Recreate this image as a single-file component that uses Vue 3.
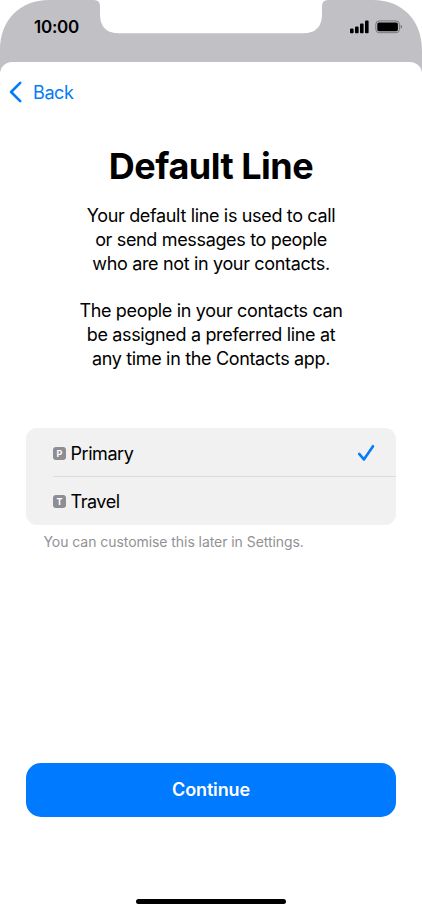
<template>
  <div class="phone">
    <header class="status-bar">
      <svg class="status-shape" viewBox="0 0 422 80" aria-hidden="true">
        <path
          d="M0 80V50C0 20 20 0 49 0H94Q100 0 100 6V14Q100 33.3 119 33.3H303Q322 33.3 322 14V6Q322 0 328 0H373C402 0 422 20 422 50V80Z"
          fill="#c1c0c5"
        />
      </svg>
      <span class="time">10:00</span>
      <svg class="status-icons" width="54" height="16" viewBox="0 0 54 16">
        <rect x="0" y="8.6" width="3.6" height="4.6" rx="1" />
        <rect x="5" y="6.4" width="3.6" height="6.8" rx="1" />
        <rect x="10" y="3.5" width="3.6" height="9.7" rx="1" />
        <rect x="15" y="0.6" width="3.6" height="12.6" rx="1" />
        <rect
          x="25.8"
          y="0.9"
          width="23.6"
          height="11.8"
          rx="3.4"
          fill="none"
          stroke="#77767a"
          stroke-width="1"
        />
        <rect x="27.3" y="2.4" width="20.6" height="8.8" rx="1.6" />
        <path d="M50.6 4.8Q52.1 5.4 52.1 6.8T50.6 8.8Z" fill="#77767a" />
      </svg>
    </header>

    <main class="sheet">
      <button class="back">
        <svg width="13" height="22" viewBox="0 0 13 22">
          <path d="M11.2 1.8L2.1 11L11.2 20.2" />
        </svg>
        <span>Back</span>
      </button>

      <h1 class="title">Default Line</h1>

      <p v-for="(lines, i) in paragraphs" :key="i" class="description">
        <span v-for="line in lines" :key="line">{{ line }}</span>
      </p>

      <ul class="lines">
        <li
          v-for="line in simLines"
          :key="line.name"
          class="line"
          @click="selected = line.name"
        >
          <div class="line-row">
            <span class="badge">{{ line.name[0] }}</span>
            <span class="line-name">{{ line.name }}</span>
            <svg
              v-if="selected === line.name"
              class="check"
              width="18"
              height="18"
              viewBox="0 0 18 18"
            >
              <path d="M2.2 9.9L6.9 15.4L16 2.2" />
            </svg>
          </div>
        </li>
      </ul>
      <p class="hint">You can customise this later in Settings.</p>

      <button class="continue">Continue</button>
      <div class="home-indicator"></div>
    </main>
  </div>
</template>

<script setup>
import { ref } from "vue";

const paragraphs = [
  [
    "Your default line is used to call",
    "or send messages to people",
    "who are not in your contacts.",
  ],
  [
    "The people in your contacts can",
    "be assigned a preferred line at",
    "any time in the Contacts app.",
  ],
];

const simLines = [{ name: "Primary" }, { name: "Travel" }];
const selected = ref("Primary");
</script>

<style>
body {
  margin: 0;
  background: #fff;
}
</style>

<style scoped>
.phone {
  display: flex;
  flex-direction: column;
  height: 913px;
  overflow: hidden;
  color: #000;
  font-family: Inter, "Liberation Sans", sans-serif;
}

button {
  border: 0;
  padding: 0;
  font-family: inherit;
  cursor: pointer;
}

.status-bar {
  position: relative;
  flex: none;
  display: flex;
  justify-content: space-between;
  align-items: flex-start;
  box-sizing: border-box;
  height: 61.5px;
  padding: 20px 18px 0 34px;
}

.status-shape {
  position: absolute;
  top: 0;
  left: 0;
  width: 422px;
  height: 80px;
}

.time {
  position: relative;
  margin-top: -3px;
  font-size: 17px;
  font-weight: 600;
  line-height: 21px;
  letter-spacing: -0.25px;
}

.status-icons {
  position: relative;
}

.sheet {
  position: relative;
  flex: 1;
  display: flex;
  flex-direction: column;
  box-sizing: border-box;
  padding: 0 26px;
  border-radius: 12px 12px 0 0;
  background: #fff;
}

.back {
  display: flex;
  align-items: center;
  align-self: flex-start;
  gap: 11px;
  height: 24px;
  margin: 18.5px 0 0 -17px;
  background: none;
  color: #047bf8;
  font-size: 18px;
  letter-spacing: -0.4px;
}

.back path,
.check path {
  fill: none;
  stroke: #047bf8;
  stroke-width: 2.6;
  stroke-linecap: round;
  stroke-linejoin: round;
}

.title {
  margin: 40px 0 16px;
  font-size: 36px;
  font-weight: 700;
  line-height: 44px;
  letter-spacing: -0.5px;
  text-align: center;
}

.description {
  margin: 0 0 24px;
  font-size: 18px;
  line-height: 23.8px;
  letter-spacing: -0.34px;
  text-align: center;
}

.description span {
  display: block;
}

.lines {
  margin: 33.6px 0 0;
  padding: 0;
  border-radius: 11px;
  background: #f1f1f1;
  list-style: none;
}

.line {
  padding-left: 27px;
}

.line-row {
  display: flex;
  align-items: center;
  box-sizing: border-box;
  height: 48px;
  padding-top: 2px;
}

.line + .line .line-row {
  border-top: 1px solid #dcdcde;
  height: 48.4px;
  padding-top: 0.6px;
}

.badge {
  width: 13px;
  height: 13px;
  border-radius: 3px;
  background: #8e8d93;
  color: #fff;
  font-size: 9px;
  font-weight: 700;
  line-height: 13px;
  text-align: center;
}

.line-name {
  margin-left: 4.5px;
  font-size: 18px;
  letter-spacing: -0.45px;
}

.check {
  margin: 0 21px 0 auto;
}

.hint {
  margin: 8.2px 0 0 17.5px;
  color: #929196;
  font-size: 14px;
  line-height: 18px;
  letter-spacing: -0.06px;
}

.continue {
  flex: none;
  height: 54px;
  margin-top: auto;
  border-radius: 15px;
  background: #007aff;
  color: #fff;
  font-size: 18px;
  font-weight: 600;
  letter-spacing: -0.15px;
}

.home-indicator {
  flex: none;
  align-self: center;
  width: 150px;
  height: 5.4px;
  margin: 82.4px 0 8.6px;
  border-radius: 3px;
  background: #000;
}
</style>
